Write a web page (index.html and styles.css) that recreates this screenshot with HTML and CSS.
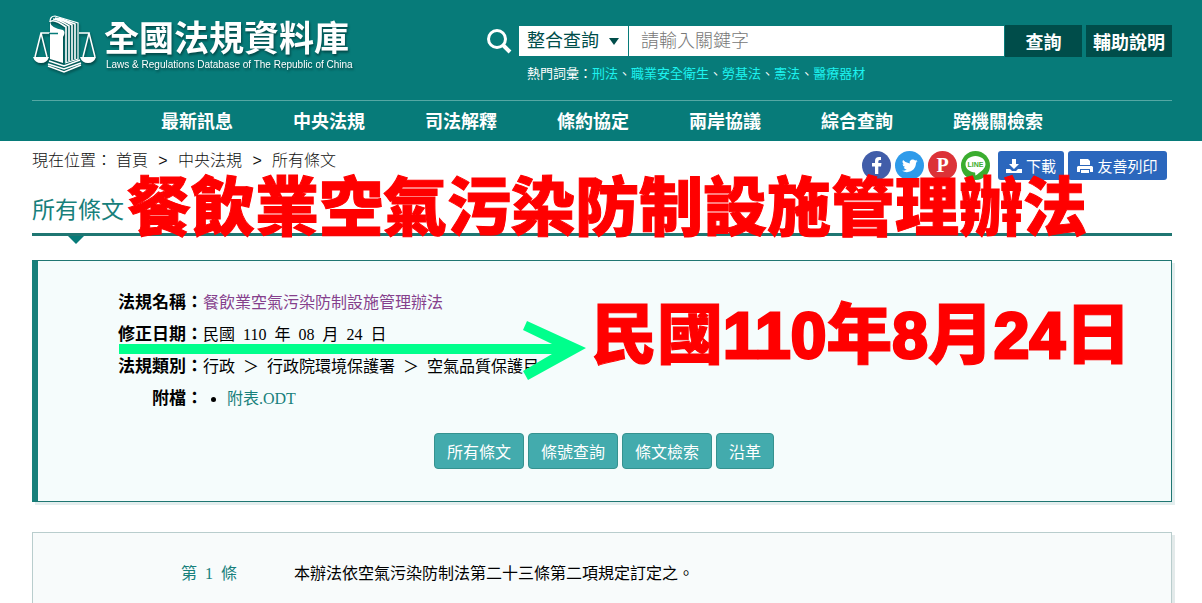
FILE: index.html
```html
<!DOCTYPE html>
<html lang="zh-Hant">
<head>
    <meta charset="UTF-8">
    <meta name="viewport" content="width=device-width, initial-scale=1.0">
    <title>餐飲業空氣污染防制設施管理辦法 - 全國法規資料庫</title>
    <link rel="stylesheet" href="styles.css">
</head>
<body>

    <!-- Header -->
    <header class="site-header">
        <div class="header-top">
            <a href="#" class="logo">
                <svg class="logo-mark" width="64" height="60" viewBox="0 0 64 60" fill="none" stroke="#fff">
                    <!-- scales -->
                    <path d="M17 18H8L2 42M8 18L14 42M46 18H56L50 42M56 18L62 42" stroke-width="1.5"/>
                    <path d="M0 42H16Q14 48 8 48Q2 48 0 42ZM47 42H63Q61 48 55 48Q49 48 47 42Z" fill="#fff" stroke="none"/>
                    <!-- book -->
                    <path d="M17 7Q18 13 30 15Q33 17 30 22V48L17 44Z" fill="#fff" stroke="none"/>
                    <path d="M17 7Q17 1 22 1L45 8V44L32 48" stroke-width="1.2"/>
                    <path d="M17 7Q20 3 33 12V47M20 4Q25 4 36 11V46M22 3Q28 4 39 10V45M26 3L42 9V44" stroke-width="1.6"/>
                    <path d="M16 18.500H25" stroke="#077b79" stroke-width="1.5"/>
                    <path d="M16 46L31 51L47 45M15 49L31 54L48 48M15 51L31 57L48 50" stroke-width="1.5"/>
                </svg>
                <span class="logo-text">
                    <span class="logo-name">全國法規資料庫</span>
                    <span class="logo-sub">Laws &amp; Regulations Database of The Republic of China</span>
                </span>
            </a>

            <div class="search">
                <form class="search-form">
                    <svg class="search-icon" width="26" height="26" viewBox="0 0 26 26" fill="none" stroke="#fff">
                        <circle cx="11" cy="11" r="8.500" stroke-width="3"/>
                        <path d="M17 17L24 24" stroke-width="4"/>
                    </svg>
                    <div class="select-wrap">
                        <select aria-label="查詢類別">
                            <option>整合查詢</option>
                        </select>
                    </div>
                    <input type="text" class="keyword" placeholder="請輸入關鍵字" aria-label="請輸入關鍵字">
                    <button type="button" class="search-btn">查詢</button>
                    <button type="button" class="help-btn">輔助說明</button>
                </form>
                <p class="hot-words">熱門詞彙：<a href="#">刑法</a>、<a href="#">職業安全衛生</a>、<a href="#">勞基法</a>、<a href="#">憲法</a>、<a href="#">醫療器材</a></p>
            </div>
        </div>

        <nav class="main-nav">
            <a href="#">最新訊息</a>
            <a href="#">中央法規</a>
            <a href="#">司法解釋</a>
            <a href="#">條約協定</a>
            <a href="#">兩岸協議</a>
            <a href="#">綜合查詢</a>
            <a href="#">跨機關檢索</a>
        </nav>
    </header>

    <main>
        <!-- Breadcrumb and share tools -->
        <div class="toolbar">
            <div class="breadcrumb">
                <span>現在位置：</span>
                <a href="#">首頁</a>
                <span class="sep">&gt;</span>
                <a href="#">中央法規</a>
                <span class="sep">&gt;</span>
                <a href="#">所有條文</a>
            </div>
            <div class="tools">
                <a href="#" class="share" aria-label="Facebook">
                    <svg width="29" height="29" viewBox="0 0 29 29">
                        <circle cx="14.500" cy="14.500" r="14.500" fill="#415da9"/>
                        <path d="M13 23V15.500H10V12H13V10Q13 6 17 6H19V9H17.500Q16.300 9 16.300 10.500V12H19.500L19 15.500H16.300V23Z" fill="#fff"/>
                    </svg>
                </a>
                <a href="#" class="share" aria-label="Twitter">
                    <svg width="29" height="29" viewBox="0 0 29 29">
                        <circle cx="14.500" cy="14.500" r="14.500" fill="#2f9bea"/>
                        <path transform="translate(7 7) scale(.65)" fill="#fff" d="M23.950 4.570a10 10 0 0 1-2.820.780 4.960 4.960 0 0 0 2.160-2.720 9.900 9.900 0 0 1-3.120 1.180 4.920 4.920 0 0 0-8.380 4.480A13.930 13.930 0 0 1 1.640 3.160a4.920 4.920 0 0 0 1.520 6.570 4.900 4.900 0 0 1-2.230-.610v.060a4.920 4.920 0 0 0 3.950 4.830 5 5 0 0 1-2.220.080 4.930 4.930 0 0 0 4.600 3.420A9.870 9.870 0 0 1 0 19.540a13.940 13.940 0 0 0 7.550 2.210c9.050 0 14-7.500 14-13.980 0-.210 0-.420-.020-.630a9.940 9.940 0 0 0 2.460-2.550z"/>
                    </svg>
                </a>
                <a href="#" class="share share-p">P</a>
                <a href="#" class="share" aria-label="LINE">
                    <svg width="29" height="29" viewBox="0 0 29 29">
                        <circle cx="14.500" cy="14.500" r="14.500" fill="#3bad2f"/>
                        <path d="M14.500 5C20 5 24.500 8.600 24.500 13.200C24.500 17.500 19 21.500 14.500 24.500C14.200 24.500 14.500 22 14 21.500C9 21.200 4.500 18 4.500 13.200C4.500 8.600 9 5 14.500 5Z" fill="#fff"/>
                        <text x="14.500" y="16" text-anchor="middle" class="line-text">LINE</text>
                    </svg>
                </a>
                <a href="#" class="tool-btn download">
                    <svg width="16" height="16" viewBox="0 0 16 16" fill="#fff">
                        <path d="M6 1H10V6H13L8 11L3 6H6ZM0 11H4L6 13H10L12 11H16V15H0Z"/>
                    </svg>
                    下載
                </a>
                <a href="#" class="tool-btn">
                    <svg width="16" height="16" viewBox="0 0 16 16" fill="#fff">
                        <path d="M3 1H11L13 3V7H3ZM1 8H15L16 9V14H13V11H3V14H0V9ZM4 12H12V15H4Z"/>
                    </svg>
                    友善列印
                </a>
            </div>
        </div>

        <div class="page-title">
            <h2>所有條文</h2>
            <div class="note note-title">餐飲業空氣污染防制設施管理辦法</div>
        </div>

        <!-- Law info -->
        <section class="law-info">
            <table>
                <tr>
                    <th scope="row">法規名稱：</th>
                    <td><a href="#" class="visited">餐飲業空氣污染防制設施管理辦法</a></td>
                </tr>
                <tr>
                    <th scope="row">修正日期：</th>
                    <td>民國&ensp;110&ensp;年&ensp;08&ensp;月&ensp;24&ensp;日</td>
                </tr>
                <tr>
                    <th scope="row">法規類別：</th>
                    <td>行政&ensp;＞&ensp;行政院環境保護署&ensp;＞&ensp;空氣品質保護目</td>
                </tr>
                <tr>
                    <th scope="row">附檔：</th>
                    <td><ul><li><a href="#">附表.ODT</a></li></ul></td>
                </tr>
            </table>
            <div class="law-actions">
                <button type="button">所有條文</button>
                <button type="button">條號查詢</button>
                <button type="button">條文檢索</button>
                <button type="button">沿革</button>
            </div>

            <svg class="note-arrow" width="468" height="60" viewBox="0 0 468 60" fill="#00ff8c">
                <path d="M0 24H433L404 10L408 1L467 28L409 60L404 51L433 34H0Z"/>
            </svg>
            <div class="note note-date">民國<span>110</span>年<span>8</span>月<span>24</span>日</div>
        </section>

        <!-- Articles -->
        <section class="law-articles">
            <div class="article">
                <a href="#" class="article-no">第&ensp;1&ensp;條</a>
                <p>本辦法依空氣污染防制法第二十三條第二項規定訂定之。</p>
            </div>
        </section>
    </main>

</body>
</html>
```

FILE: styles.css
```css
* {
    margin: 0;
    padding: 0;
    box-sizing: border-box;
}

body {
    font-family: "Liberation Sans", "Noto Sans CJK TC", sans-serif;
    font-size: 16px;
    color: #333;
    background-color: #fff;
}

a {
    color: #17807b;
    text-decoration: none;
}

button,
select,
input {
    font-family: inherit;
    border: none;
    border-radius: 0;
}

/* Header */
.site-header {
    padding: 0 30px 0 32px;
    background-color: #077b79;
}

.header-top {
    display: flex;
    justify-content: space-between;
    height: 100px;
}

.logo {
    display: flex;
    gap: 7px;
    padding: 15px 0 0 1px;
    color: #fff;
}

.logo-mark,
.logo-text {
    filter: drop-shadow(1px 2px 1px rgba(0, 40, 40, 0.6));
}

.logo-text {
    display: flex;
    flex-direction: column;
    padding-top: 4px;
    white-space: nowrap;
}

.logo-name {
    font-size: 35px;
    font-weight: 700;
    line-height: 40px;
}

.logo-sub {
    padding-left: 2px;
    font-size: 10px;
    line-height: 12px;
}

.search {
    flex: 0 1 686px;
    padding-top: 25px;
}

.search-form {
    display: flex;
    align-items: center;
    height: 32px;
}

.search-icon {
    flex-shrink: 0;
    margin-right: 7px;
}

.select-wrap {
    position: relative;
    flex-shrink: 0;
    width: 109px;
    margin-right: 1px;
}

.select-wrap::after {
    content: "";
    position: absolute;
    top: 12px;
    right: 9px;
    border: 5px solid transparent;
    border-top: 7px solid #004d4a;
    border-bottom: none;
    pointer-events: none;
}

.select-wrap select {
    display: block;
    width: 100%;
    height: 30px;
    padding-left: 8px;
    appearance: none;
    background-color: #fff;
    color: #004d4a;
    font-size: 18px;
}

.keyword {
    flex: 1;
    min-width: 0;
    height: 30px;
    padding: 0 12px;
    font-size: 18px;
    font-weight: 300;
}

.keyword::placeholder {
    color: #777;
}

.search-btn,
.help-btn {
    flex-shrink: 0;
    height: 32px;
    background-color: #004d4a;
    color: #fff;
    font-size: 18px;
    font-weight: bold;
    cursor: pointer;
}

.search-btn {
    width: 77px;
    margin: 0 4px 0 1px;
}

.help-btn {
    width: 86px;
}

.hot-words {
    padding: 8px 0 0 41px;
    color: #fff;
    font-size: 13px;
    line-height: 18px;
}

.hot-words a {
    color: #1df3f0;
}

.main-nav {
    display: flex;
    justify-content: center;
    gap: 60px;
    padding-top: 2px;
    border-top: 1px solid #55a8a4;
}

.main-nav a {
    color: #fff;
    font-size: 18px;
    font-weight: bold;
    line-height: 38px;
}

/* Content */
main {
    padding: 10px 30px 40px 32px;
}

.toolbar {
    display: flex;
    justify-content: space-between;
    align-items: flex-start;
}

.breadcrumb {
    display: flex;
    line-height: 20px;
    font-weight: 300;
}

.breadcrumb,
.breadcrumb a {
    color: #111;
}

.breadcrumb span:first-child {
    margin-right: 4px;
}

.sep {
    width: 30px;
    text-align: center;
}

.tools {
    display: flex;
    gap: 4px;
    padding-right: 5px;
}

.share {
    display: flex;
    justify-content: center;
    align-items: center;
    width: 29px;
    height: 29px;
}

.share-p {
    border-radius: 50%;
    background-color: #dc3237;
    color: #fff;
    font-family: "Liberation Serif", serif;
    font-size: 20px;
    font-weight: bold;
}

.line-text {
    fill: #3bad2f;
    font-size: 7px;
    font-weight: bold;
}

.tool-btn {
    display: flex;
    justify-content: center;
    align-items: center;
    gap: 4px;
    width: 99px;
    height: 29px;
    border-radius: 3px;
    background-color: #2b67bd;
    color: #fff;
    font-size: 15px;
}

.download {
    width: 66px;
    margin-left: 4px;
}

.page-title {
    position: relative;
    padding: 15px 0 7px;
    border-bottom: 3px solid #1f7672;
}

.page-title::after {
    content: "";
    position: absolute;
    top: 100%;
    left: 36px;
    margin-top: 3px;
    border: 8px solid transparent;
    border-top-color: #077b79;
    border-bottom: none;
}

.page-title h2 {
    color: #17807b;
    font-size: 23px;
    font-weight: 400;
    line-height: 31px;
}

.law-info {
    position: relative;
    margin-top: 24px;
    padding: 26px 30px 32px 80px;
    border: 1px solid #1f7672;
    border-left: 6px solid #17807b;
    background-color: #f5fcfc;
    box-shadow: 3px 3px 0 #e3eeee;
}

.law-info table,
.article {
    border-collapse: collapse;
    color: #000;
    font-family: "Liberation Serif", "Noto Sans CJK TC", serif;
    line-height: 32px;
}

.law-info th {
    font-size: 17px;
    text-align: right;
}

.law-info .visited {
    color: #85408c;
}

.law-info ul {
    padding-left: 24px;
}

.law-actions {
    display: flex;
    justify-content: center;
    gap: 4px;
    margin-top: 18px;
    padding-right: 51px;
}

.law-actions button {
    height: 36px;
    padding: 0 12px;
    border: 1px solid #35928f;
    border-radius: 4px;
    background-color: #43abad;
    color: #fff;
    font-size: 16px;
    cursor: pointer;
}

.law-articles {
    margin-top: 30px;
    padding: 25px 30px 60px 148px;
    border: 1px solid #b9cdcd;
    background-color: #f8fbfb;
    box-shadow: 3px 3px 0 #e3eaea;
}

.article {
    display: flex;
}

.article-no {
    width: 113px;
}

/* Notes drawn over the page */
.note {
    position: absolute;
    color: #f00;
    font-weight: 900;
    white-space: nowrap;
    -webkit-text-stroke: 1px #f00;
}

.note-title {
    top: -7px;
    left: 95px;
    font-size: 64px;
    line-height: 70px;
}

.note-date {
    top: 38px;
    left: 553px;
    font-size: 66px;
    line-height: 72px;
}

.note-date span {
    font-family: "Liberation Sans", sans-serif;
    font-size: 64px;
    -webkit-text-stroke: 3px #f00;
}

.note-arrow {
    position: absolute;
    top: 59px;
    left: 81px;
}
```
